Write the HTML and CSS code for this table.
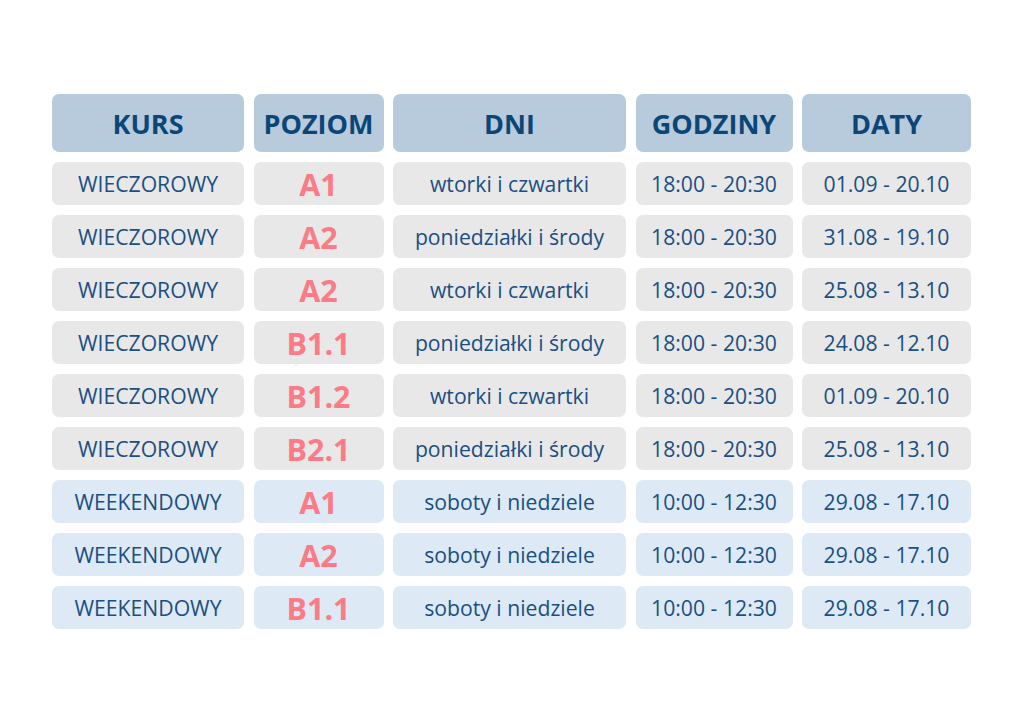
FILE: index.html
```html
<!DOCTYPE html>
<html lang="pl">
<head>
<meta charset="utf-8">
<title>Kursy</title>
<link rel="stylesheet" href="styles.css">
</head>
<body>
<main class="page">
  <div class="schedule">
    <div class="cell head">KURS</div>
    <div class="cell head">POZIOM</div>
    <div class="cell head">DNI</div>
    <div class="cell head">GODZINY</div>
    <div class="cell head">DATY</div>

    <div class="cell eve">WIECZOROWY</div>
    <div class="cell eve level">A1</div>
    <div class="cell eve">wtorki i czwartki</div>
    <div class="cell eve">18:00 - 20:30</div>
    <div class="cell eve">01.09 - 20.10</div>

    <div class="cell eve">WIECZOROWY</div>
    <div class="cell eve level">A2</div>
    <div class="cell eve">poniedziałki i środy</div>
    <div class="cell eve">18:00 - 20:30</div>
    <div class="cell eve">31.08 - 19.10</div>

    <div class="cell eve">WIECZOROWY</div>
    <div class="cell eve level">A2</div>
    <div class="cell eve">wtorki i czwartki</div>
    <div class="cell eve">18:00 - 20:30</div>
    <div class="cell eve">25.08 - 13.10</div>

    <div class="cell eve">WIECZOROWY</div>
    <div class="cell eve level">B1.1</div>
    <div class="cell eve">poniedziałki i środy</div>
    <div class="cell eve">18:00 - 20:30</div>
    <div class="cell eve">24.08 - 12.10</div>

    <div class="cell eve">WIECZOROWY</div>
    <div class="cell eve level">B1.2</div>
    <div class="cell eve">wtorki i czwartki</div>
    <div class="cell eve">18:00 - 20:30</div>
    <div class="cell eve">01.09 - 20.10</div>

    <div class="cell eve">WIECZOROWY</div>
    <div class="cell eve level">B2.1</div>
    <div class="cell eve">poniedziałki i środy</div>
    <div class="cell eve">18:00 - 20:30</div>
    <div class="cell eve">25.08 - 13.10</div>

    <div class="cell wknd">WEEKENDOWY</div>
    <div class="cell wknd level">A1</div>
    <div class="cell wknd">soboty i niedziele</div>
    <div class="cell wknd">10:00 - 12:30</div>
    <div class="cell wknd">29.08 - 17.10</div>

    <div class="cell wknd">WEEKENDOWY</div>
    <div class="cell wknd level">A2</div>
    <div class="cell wknd">soboty i niedziele</div>
    <div class="cell wknd">10:00 - 12:30</div>
    <div class="cell wknd">29.08 - 17.10</div>

    <div class="cell wknd">WEEKENDOWY</div>
    <div class="cell wknd level">B1.1</div>
    <div class="cell wknd">soboty i niedziele</div>
    <div class="cell wknd">10:00 - 12:30</div>
    <div class="cell wknd">29.08 - 17.10</div>
  </div>
</main>
</body>
</html>
```

FILE: styles.css
```css
html, body {
  margin: 0;
  padding: 0;
  background: #ffffff;
}

body {
  font-family: "Open Sans", "DejaVu Sans", sans-serif;
  width: 1024px;
  height: 725px;
  overflow: hidden;
}

.page {
  padding: 94px 0 0 52px;
}

.schedule {
  display: grid;
  grid-template-columns: 192px 130px 233px 157px 169px;
  grid-template-rows: 58px repeat(9, 43px);
  column-gap: 9.5px;
  row-gap: 10px;
}

.cell {
  display: flex;
  align-items: center;
  justify-content: center;
  border-radius: 7px;
  color: #1b4f82;
  font-size: 21.2px;
  white-space: nowrap;
}

.head {
  background: #b8cbdd;
  color: #0b4677;
  font-weight: 700;
  font-size: 27px;
}

.eve {
  background: #e8e8e8;
}

.wknd {
  background: #ddeaf6;
}

.level {
  color: #fc7b86;
  font-weight: 700;
  font-size: 30.5px;
}
```
